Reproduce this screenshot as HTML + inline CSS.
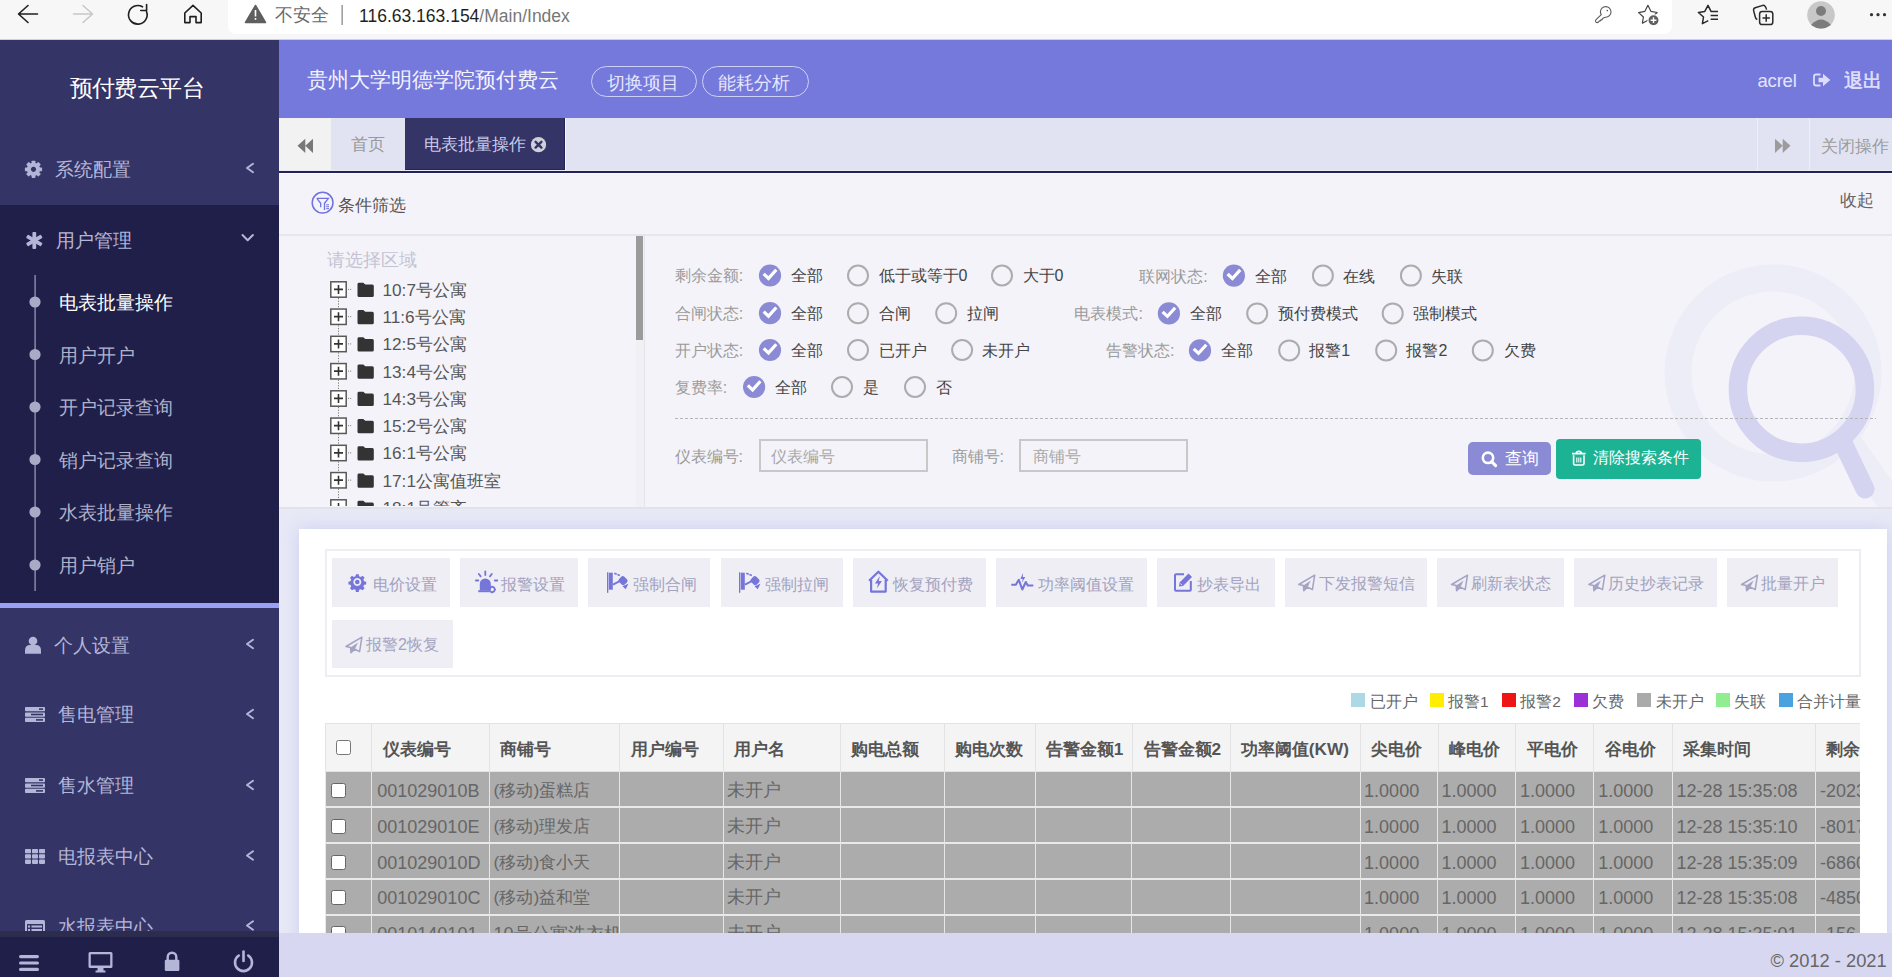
<!DOCTYPE html>
<html><head><meta charset="utf-8">
<style>
*{box-sizing:border-box}
html,body{margin:0;padding:0;width:1892px;height:977px;overflow:hidden;background:#f4f3f9;font-family:"Liberation Sans",sans-serif}
.a{position:absolute;white-space:nowrap;line-height:1}
.r{position:absolute}
svg{position:absolute;overflow:visible}
</style></head><body>
<!-- ================= BROWSER CHROME ================= -->
<div class="r" style="left:0;top:0;width:1892px;height:40px;background:#f7f7f7;border-bottom:1px solid #d2d2d2"></div>
<div class="r" style="left:228px;top:0;width:1444px;height:34px;background:#fff;border-radius:0 0 8px 8px"></div>
<svg style="left:0;top:0" width="1892" height="40">
 <g fill="none" stroke="#1f1f1f" stroke-width="1.6" stroke-linecap="round" stroke-linejoin="round">
  <path d="M28 5.5 L18.5 14 L28 22.5 M18.5 14 H37.5"/>
  <path d="M83 5.5 L92.5 14 L83 22.5 M92.5 14 H73.5" stroke="#c8c8c8"/>
  <path d="M146.5 11.5 A9.3 9.3 0 1 1 142.5 6.8"/>
  <path d="M146.6 4.6 V10.5 H140.8"/>
  <path d="M184.8 13 L193 5.3 L201.2 13 V22.6 H196 V16.6 H190 V22.6 H184.8 Z"/>
 </g>
 <path d="M255.5 5.5 L265.5 22.5 H245.5 Z" fill="#5f5f5f" stroke="#5f5f5f" stroke-width="1.5" stroke-linejoin="round"/>
 <rect x="254.7" y="10" width="1.6" height="6.5" fill="#fff"/><rect x="254.7" y="18" width="1.6" height="1.8" fill="#fff"/>
 <rect x="341.5" y="5" width="1.3" height="20" fill="#8a8a8a"/>
 <!-- right icons -->
 <g fill="none" stroke="#5a5a5a" stroke-width="1.3" stroke-linecap="round" stroke-linejoin="round">
  <path d="M1601.3 14.6 L1596 19.7 Q1594.8 21.3 1596.1 22.3 Q1597.3 23.1 1598.5 22 L1599.4 20.9 L1600.2 21 L1600.9 19.8 L1601.8 19.9 L1602.6 18.6 Q1603.6 17.5 1605.7 17.2 A5.3 5.3 0 1 0 1600.4 11.9 Q1600.5 13.6 1601.3 14.6 Z" stroke-width="1.1"/>
 </g>
 <g fill="none" stroke="#2a2a2a" stroke-width="1.5" stroke-linejoin="round">
  <path d="M1647.9 5.3 L1650.9 11.3 L1657.2 12.5 L1652.3 16.8 L1653.4 23.3 L1647.9 20.2 L1642.4 23.2 L1643.4 17 L1638.6 12.6 L1644.9 11.3 Z" stroke="#444" stroke-width="1.2"/>
  <path d="M1708.3 20.7 L1702.4 23.6 L1703.5 17 L1698.4 12.5 L1704.8 11.4 L1708 5.4 L1711 11.4 H1718 M1710.6 15.4 H1718 M1710.6 19.2 H1718"/>
  <path d="M1757.3 19.6 Q1755.8 19 1755.3 17 L1753.6 10.6 Q1753.2 8.6 1755.2 7.8 L1762.8 5.4 Q1765.2 4.9 1766.6 9.6"/>
  <rect x="1759.6" y="11.4" width="13.2" height="13.2" rx="2.6"/>
  <path d="M1766.2 14.3 V21.7 M1762.5 18 H1769.9"/>
 </g>
 <circle cx="1653.5" cy="20.2" r="5.6" fill="#5f5f5f" stroke="#fff" stroke-width="1.2"/><circle cx="1607.3" cy="10.6" r="0.8" fill="#555"/>
 <path d="M1650.6 20.2 H1656.4 M1653.5 17.3 V23.1" stroke="#fff" stroke-width="1.4"/>
 
 <circle cx="1821" cy="15" r="13.8" fill="#c8c8c8"/>
 <circle cx="1821" cy="11" r="5" fill="#7c7c7c"/>
 <path d="M1811 25 Q1821 14 1831 25 Q1821 32 1811 25 Z" fill="#7c7c7c"/>
 <circle cx="1871.5" cy="14.7" r="1.6" fill="#333"/><circle cx="1878" cy="14.7" r="1.6" fill="#333"/><circle cx="1884.5" cy="14.7" r="1.6" fill="#333"/>
</svg>
<div class="a" style="left:275px;top:7px;font-size:17.5px;color:#6a6a6a">不安全</div>
<div class="a" style="left:359px;top:7.5px;font-size:17.5px;color:#1f1f1f">116.63.163.154<span style="color:#777">/Main/Index</span></div>

<!-- ================= SIDEBAR ================= -->
<div class="r" style="left:0;top:40px;width:279px;height:937px;background:#353466"></div>
<div class="r" style="left:0;top:205px;width:279px;height:398px;background:#1f1f49"></div>
<div class="r" style="left:0;top:603px;width:279px;height:5px;background:#9aa1f4"></div>
<div class="a" style="left:69.5px;top:76.5px;font-size:23px;letter-spacing:-0.6px;color:#fff">预付费云平台</div>
<svg style="left:0;top:0" width="279" height="977">
 <g fill="#b4b6d8">
  <!-- gear -->
  <path d="M33.5 162.70000000000002a6.6 6.6 0 1 0 .01 0z M33.5 166.70000000000002a2.6 2.6 0 1 1 -.01 0z" fill-rule="evenodd"/><rect x="31.6" y="160.70000000000002" width="3.8" height="4" rx=".6" transform="rotate(0 33.5 169.3)"/><rect x="31.6" y="160.70000000000002" width="3.8" height="4" rx=".6" transform="rotate(45 33.5 169.3)"/><rect x="31.6" y="160.70000000000002" width="3.8" height="4" rx=".6" transform="rotate(90 33.5 169.3)"/><rect x="31.6" y="160.70000000000002" width="3.8" height="4" rx=".6" transform="rotate(135 33.5 169.3)"/><rect x="31.6" y="160.70000000000002" width="3.8" height="4" rx=".6" transform="rotate(180 33.5 169.3)"/><rect x="31.6" y="160.70000000000002" width="3.8" height="4" rx=".6" transform="rotate(225 33.5 169.3)"/><rect x="31.6" y="160.70000000000002" width="3.8" height="4" rx=".6" transform="rotate(270 33.5 169.3)"/><rect x="31.6" y="160.70000000000002" width="3.8" height="4" rx=".6" transform="rotate(315 33.5 169.3)"/>
  <!-- asterisk -->
  <g transform="translate(34.3 240.5)"><rect x="-1.9" y="-8.6" width="3.8" height="17.2" rx="1"/><rect x="-1.9" y="-8.6" width="3.8" height="17.2" rx="1" transform="rotate(60)"/><rect x="-1.9" y="-8.6" width="3.8" height="17.2" rx="1" transform="rotate(-60)"/></g>
  <!-- user -->
  <circle cx="33" cy="641" r="4.3"/>
  <path d="M25 653.7v-3.2q0-5.5 5-5.5h6q5 0 5 5.5v3.2z"/>
  <!-- server 售电 -->
  <g transform="translate(0 0)"><rect x="25" y="707" width="20" height="4.3" rx=".8"/><rect x="25" y="712.4" width="20" height="4.3" rx=".8"/><rect x="25" y="717.8" width="20" height="4.3" rx=".8"/></g>
  <!-- server 售水 -->
  <rect x="25" y="778" width="20" height="4.3" rx=".8"/><rect x="25" y="783.4" width="20" height="4.3" rx=".8"/><rect x="25" y="788.8" width="20" height="4.3" rx=".8"/>
  <!-- grid -->
  <g><rect x="25" y="849" width="6" height="4.3" rx=".8"/><rect x="32" y="849" width="6" height="4.3" rx=".8"/><rect x="39" y="849" width="6" height="4.3" rx=".8"/>
  <rect x="25" y="854.3" width="6" height="4.3" rx=".8"/><rect x="32" y="854.3" width="6" height="4.3" rx=".8"/><rect x="39" y="854.3" width="6" height="4.3" rx=".8"/>
  <rect x="25" y="859.6" width="6" height="4.3" rx=".8"/><rect x="32" y="859.6" width="6" height="4.3" rx=".8"/><rect x="39" y="859.6" width="6" height="4.3" rx=".8"/></g>
  <!-- list -->
  <rect x="25" y="920" width="20" height="16" rx="1.5"/>
 </g>
 <g fill="#353466">
  <rect x="39" y="708.3" width="4" height="1.6"/><rect x="31" y="713.7" width="12" height="1.6"/><rect x="36" y="719.1" width="7" height="1.6"/>
  <rect x="39" y="779.3" width="4" height="1.6"/><rect x="31" y="784.7" width="12" height="1.6"/><rect x="36" y="790.1" width="7" height="1.6"/>
  <rect x="27" y="924" width="16" height="10"/>
 </g>
 <g fill="#b4b6d8"><rect x="28" y="925.5" width="2" height="2"/><rect x="31.5" y="925.5" width="10.5" height="2"/><rect x="28" y="929" width="2" height="2"/><rect x="31.5" y="929" width="10.5" height="2"/></g>
 <!-- chevrons -->
 <g fill="none" stroke="#b4b6d8" stroke-width="2" stroke-linecap="round" stroke-linejoin="round">
  <path d="M253 163.8 L247 168 L253 172.2"/>
  <path d="M242.5 235 L247.7 240.3 L252.9 235"/>
  <path d="M253 639.8 L247 644 L253 648.2"/>
  <path d="M253 709.8 L247 714 L253 718.2"/>
  <path d="M253 780.8 L247 785 L253 789.2"/>
  <path d="M253 851.3 L247 855.5 L253 859.7"/>
  <path d="M253 921.3 L247 925.5 L253 929.7"/>
 </g>
 <!-- timeline -->
 <rect x="34.4" y="275" width="1.4" height="316" fill="#8d8fae"/>
 <g fill="#a9abc6">
  <circle cx="35" cy="302" r="5.6"/><circle cx="35" cy="354.5" r="5.6"/><circle cx="35" cy="407" r="5.6"/><circle cx="35" cy="459.5" r="5.6"/><circle cx="35" cy="512" r="5.6"/><circle cx="35" cy="565" r="5.6"/>
 </g>
</svg>
<div class="a" style="left:55.2px;top:161.3px;font-size:18.8px;color:#b4b6d8">系统配置</div>
<div class="a" style="left:56.2px;top:232.3px;font-size:18.8px;color:#b4b6d8">用户管理</div>
<div class="a" style="left:59px;top:293.0px;font-size:19px;color:#fff">电表批量操作</div>
<div class="a" style="left:59px;top:345.5px;font-size:19px;color:#b0b2cc">用户开户</div>
<div class="a" style="left:59px;top:398.0px;font-size:19px;color:#b0b2cc">开户记录查询</div>
<div class="a" style="left:59px;top:450.5px;font-size:19px;color:#b0b2cc">销户记录查询</div>
<div class="a" style="left:59px;top:503.0px;font-size:19px;color:#b0b2cc">水表批量操作</div>
<div class="a" style="left:59px;top:556.0px;font-size:19px;color:#b0b2cc">用户销户</div>
<div class="a" style="left:54.2px;top:636.8px;font-size:18.8px;color:#b4b6d8">个人设置</div>
<div class="a" style="left:58.2px;top:706.3px;font-size:18.8px;color:#b4b6d8">售电管理</div>
<div class="a" style="left:58.2px;top:777.3px;font-size:18.8px;color:#b4b6d8">售水管理</div>
<div class="a" style="left:58.2px;top:847.8px;font-size:18.8px;color:#b4b6d8">电报表中心</div>
<div class="a" style="left:58.2px;top:918.3px;font-size:18.8px;color:#b4b6d8">水报表中心</div>
<div class="r" style="left:0;top:931px;width:279px;height:6px;background:#2c2c4f"></div>
<div class="r" style="left:0;top:937px;width:279px;height:40px;background:#1f1f49"></div>
<svg style="left:0;top:937px" width="279" height="40">
 <g fill="#b4b6d8">
  <rect x="19" y="18" width="20" height="3.2" rx="1.6"/><rect x="19" y="24.4" width="20" height="3.2" rx="1.6"/><rect x="19" y="30.8" width="20" height="3.2" rx="1.6"/>
  <path d="M90 15h21a1.5 1.5 0 0 1 1.5 1.5v13a1.5 1.5 0 0 1-1.5 1.5h-21a1.5 1.5 0 0 1-1.5-1.5v-13a1.5 1.5 0 0 1 1.5-1.5z M90.8 17.3v11.2h19.4v-11.2z" fill-rule="evenodd"/>
  <rect x="97.5" y="31" width="6" height="3"/><rect x="95.5" y="33.5" width="10" height="2" rx=".5"/>
  <path d="M166.5 23v-3a5.5 5.5 0 0 1 11 0v3h-2.4v-3a3.1 3.1 0 0 0-6.2 0v3z"/><rect x="164.8" y="22.8" width="14.6" height="11.2" rx="1.2"/>
 </g>
 <g fill="none" stroke="#b4b6d8" stroke-width="2.6" stroke-linecap="round">
  <path d="M238.8 18.5 A8.5 8.5 0 1 0 248.2 18.5"/><path d="M243.5 14.5 V24"/>
 </g>
</svg>



<!-- ================= HEADER ================= -->
<div class="r" style="left:279px;top:40px;width:1613px;height:78px;background:#7579db"></div>
<div class="a" style="left:306.5px;top:68.5px;font-size:21.1px;color:#f4f4ff">贵州大学明德学院预付费云</div>
<div class="r" style="left:591px;top:66px;width:106px;height:31px;border:1px solid #cdd0f7;border-radius:16px"></div>
<div class="r" style="left:702px;top:66px;width:107px;height:31px;border:1px solid #cdd0f7;border-radius:16px"></div>
<div class="a" style="left:607px;top:73.5px;font-size:18.2px;color:#e6e7ff">切换项目</div>
<div class="a" style="left:718px;top:73.5px;font-size:18.2px;color:#e6e7ff">能耗分析</div>
<div class="a" style="left:1757.5px;top:71.5px;font-size:18.5px;letter-spacing:-0.2px;color:#e4e4ff">acrel</div>
<svg style="left:0;top:0" width="1892" height="120">
 <path d="M1820.5 74.5 H1816 Q1814 74.5 1814 76.5 V83.5 Q1814 85.5 1816 85.5 H1820.5" fill="none" stroke="#dcdcfb" stroke-width="1.8"/>
 <path d="M1818.5 77.8 H1823 V73.8 L1830.3 80 L1823 86.2 V82.2 H1818.5 Z" fill="#dcdcfb"/>
</svg>
<div class="a" style="left:1844px;top:71.3px;font-size:19px;font-weight:bold;color:#dcdcfb">退出</div>

<!-- ================= TABS ================= -->
<div class="r" style="left:279px;top:118px;width:1613px;height:53px;background:#e1e3f3"></div>
<div class="r" style="left:279px;top:118px;width:52px;height:52px;background:#f2f2f2"></div>
<div class="r" style="left:279px;top:170px;width:1613px;height:1px;background:#ebebf6"></div>
<div class="r" style="left:279px;top:171px;width:1613px;height:2px;background:#22215a"></div>
<div class="r" style="left:279px;top:173px;width:1613px;height:1px;background:#fbfbff"></div>
<div class="r" style="left:405px;top:118px;width:160px;height:52px;background:#353466;border-right:1px solid #25245a;border-bottom:1px solid #25245a"></div>
<div class="r" style="left:565px;top:118px;width:1px;height:53px;background:#f6f6fb"></div>
<div class="r" style="left:1757px;top:118px;width:1px;height:52px;background:#f0f0f4"></div>
<div class="r" style="left:1809px;top:118px;width:1px;height:52px;background:#f0f0f4"></div>
<svg style="left:0;top:118px" width="1892" height="55">
 <path d="M297.5 27.8 L305.3 20.7 V34.9 Z M305.3 27.8 L313 20.7 V34.9 Z" fill="#787878"/>
 <path d="M1790.5 27.8 L1782.7 20.7 V34.9 Z M1782.7 27.8 L1775 20.7 V34.9 Z" fill="#9c9c9c"/>
 <circle cx="538.5" cy="26.7" r="7.6" fill="#cfd0da"/>
 <path d="M535.6 23.8 L541.4 29.6 M541.4 23.8 L535.6 29.6" stroke="#353466" stroke-width="2.4" stroke-linecap="round"/>
</svg>
<div class="a" style="left:351px;top:135.5px;font-size:17.4px;color:#9a9a9a">首页</div>
<div class="a" style="left:423.5px;top:136.3px;font-size:17.2px;color:#c9cbe9">电表批量操作</div>
<div class="a" style="left:1821px;top:137.5px;font-size:17.4px;color:#9c9c9c">关闭操作</div>

<!-- ================= FILTER ================= -->
<svg style="left:0;top:0" width="1892" height="977">
 <circle cx="1773" cy="373" r="95" fill="none" stroke="#ededf7" stroke-width="27"/>
 <path d="M1845 438 L1900 515" stroke="#ededf7" stroke-width="27"/>
 <circle cx="1801.4" cy="389.2" r="63.5" fill="none" stroke="#d4d3f0" stroke-width="18.5"/>
 <path d="M1843 443 L1865 489" stroke="#d4d3f0" stroke-width="19" stroke-linecap="round"/>
 <circle cx="322.6" cy="202.7" r="10.4" fill="none" stroke="#7272df" stroke-width="1.5"/>
 <path d="M316.8 198.3 H328.4 L324.5 203.3 V210 M316.8 198.3 L320.7 203.3 V207.3" fill="none" stroke="#7272df" stroke-width="1.3"/>
 <path d="M326.2 204.8 H329 M326.2 206.7 H329 M326.2 208.6 H329" stroke="#7272df" stroke-width="1"/>
</svg>
<div class="a" style="left:338px;top:196.5px;font-size:17.3px;color:#555">条件筛选</div>
<div class="a" style="left:1839.5px;top:191.5px;font-size:17.3px;color:#666">收起</div>
<div class="r" style="left:279px;top:234px;width:1613px;height:2px;background:#e6e6ee"></div>
<div class="r" style="left:644px;top:236px;width:1px;height:271px;background:#e4e4ec"></div>
<div class="r" style="left:636px;top:236px;width:8px;height:271px;background:#f1f1f5"></div>
<div class="r" style="left:636px;top:236px;width:7px;height:104px;background:#9b9b9b"></div>
<div class="a" style="left:326.5px;top:251px;font-size:18px;color:#c5c3d3">请选择区域</div>
<div class="r" style="left:279px;top:236px;width:357px;height:270px;overflow:hidden">
<svg style="left:-279px;top:-236px" width="700" height="560">
<rect x="330.8" y="281.80" width="15.4" height="15.4" fill="#fff" stroke="#585858" stroke-width="1.5"/>
<path d="M334 289.40 H343 M338.5 284.90 V293.90" stroke="#333" stroke-width="1.6"/>
<path d="M348 289.40 H352" stroke="#777" stroke-width="1" stroke-dasharray="1 1.2"/>
<path d="M338.5 298.00 V308.00" stroke="#777" stroke-width="1" stroke-dasharray="1.2 1.5"/>
<path d="M357.5 284.20 Q357.5 282.80 359 282.80 H363.3 L365.3 284.60 H372.3 Q373.8 284.60 373.8 286.10 V295.40 Q373.8 297.00 372.3 297.00 H359 Q357.5 297.00 357.5 295.40 Z" fill="#333"/>
<rect x="330.8" y="309.05" width="15.4" height="15.4" fill="#fff" stroke="#585858" stroke-width="1.5"/>
<path d="M334 316.65 H343 M338.5 312.15 V321.15" stroke="#333" stroke-width="1.6"/>
<path d="M348 316.65 H352" stroke="#777" stroke-width="1" stroke-dasharray="1 1.2"/>
<path d="M338.5 325.25 V335.25" stroke="#777" stroke-width="1" stroke-dasharray="1.2 1.5"/>
<path d="M357.5 311.45 Q357.5 310.05 359 310.05 H363.3 L365.3 311.85 H372.3 Q373.8 311.85 373.8 313.35 V322.65 Q373.8 324.25 372.3 324.25 H359 Q357.5 324.25 357.5 322.65 Z" fill="#333"/>
<rect x="330.8" y="336.30" width="15.4" height="15.4" fill="#fff" stroke="#585858" stroke-width="1.5"/>
<path d="M334 343.90 H343 M338.5 339.40 V348.40" stroke="#333" stroke-width="1.6"/>
<path d="M348 343.90 H352" stroke="#777" stroke-width="1" stroke-dasharray="1 1.2"/>
<path d="M338.5 352.50 V362.50" stroke="#777" stroke-width="1" stroke-dasharray="1.2 1.5"/>
<path d="M357.5 338.70 Q357.5 337.30 359 337.30 H363.3 L365.3 339.10 H372.3 Q373.8 339.10 373.8 340.60 V349.90 Q373.8 351.50 372.3 351.50 H359 Q357.5 351.50 357.5 349.90 Z" fill="#333"/>
<rect x="330.8" y="363.55" width="15.4" height="15.4" fill="#fff" stroke="#585858" stroke-width="1.5"/>
<path d="M334 371.15 H343 M338.5 366.65 V375.65" stroke="#333" stroke-width="1.6"/>
<path d="M348 371.15 H352" stroke="#777" stroke-width="1" stroke-dasharray="1 1.2"/>
<path d="M338.5 379.75 V389.75" stroke="#777" stroke-width="1" stroke-dasharray="1.2 1.5"/>
<path d="M357.5 365.95 Q357.5 364.55 359 364.55 H363.3 L365.3 366.35 H372.3 Q373.8 366.35 373.8 367.85 V377.15 Q373.8 378.75 372.3 378.75 H359 Q357.5 378.75 357.5 377.15 Z" fill="#333"/>
<rect x="330.8" y="390.80" width="15.4" height="15.4" fill="#fff" stroke="#585858" stroke-width="1.5"/>
<path d="M334 398.40 H343 M338.5 393.90 V402.90" stroke="#333" stroke-width="1.6"/>
<path d="M348 398.40 H352" stroke="#777" stroke-width="1" stroke-dasharray="1 1.2"/>
<path d="M338.5 407.00 V417.00" stroke="#777" stroke-width="1" stroke-dasharray="1.2 1.5"/>
<path d="M357.5 393.20 Q357.5 391.80 359 391.80 H363.3 L365.3 393.60 H372.3 Q373.8 393.60 373.8 395.10 V404.40 Q373.8 406.00 372.3 406.00 H359 Q357.5 406.00 357.5 404.40 Z" fill="#333"/>
<rect x="330.8" y="418.05" width="15.4" height="15.4" fill="#fff" stroke="#585858" stroke-width="1.5"/>
<path d="M334 425.65 H343 M338.5 421.15 V430.15" stroke="#333" stroke-width="1.6"/>
<path d="M348 425.65 H352" stroke="#777" stroke-width="1" stroke-dasharray="1 1.2"/>
<path d="M338.5 434.25 V444.25" stroke="#777" stroke-width="1" stroke-dasharray="1.2 1.5"/>
<path d="M357.5 420.45 Q357.5 419.05 359 419.05 H363.3 L365.3 420.85 H372.3 Q373.8 420.85 373.8 422.35 V431.65 Q373.8 433.25 372.3 433.25 H359 Q357.5 433.25 357.5 431.65 Z" fill="#333"/>
<rect x="330.8" y="445.30" width="15.4" height="15.4" fill="#fff" stroke="#585858" stroke-width="1.5"/>
<path d="M334 452.90 H343 M338.5 448.40 V457.40" stroke="#333" stroke-width="1.6"/>
<path d="M348 452.90 H352" stroke="#777" stroke-width="1" stroke-dasharray="1 1.2"/>
<path d="M338.5 461.50 V471.50" stroke="#777" stroke-width="1" stroke-dasharray="1.2 1.5"/>
<path d="M357.5 447.70 Q357.5 446.30 359 446.30 H363.3 L365.3 448.10 H372.3 Q373.8 448.10 373.8 449.60 V458.90 Q373.8 460.50 372.3 460.50 H359 Q357.5 460.50 357.5 458.90 Z" fill="#333"/>
<rect x="330.8" y="472.55" width="15.4" height="15.4" fill="#fff" stroke="#585858" stroke-width="1.5"/>
<path d="M334 480.15 H343 M338.5 475.65 V484.65" stroke="#333" stroke-width="1.6"/>
<path d="M348 480.15 H352" stroke="#777" stroke-width="1" stroke-dasharray="1 1.2"/>
<path d="M338.5 488.75 V498.75" stroke="#777" stroke-width="1" stroke-dasharray="1.2 1.5"/>
<path d="M357.5 474.95 Q357.5 473.55 359 473.55 H363.3 L365.3 475.35 H372.3 Q373.8 475.35 373.8 476.85 V486.15 Q373.8 487.75 372.3 487.75 H359 Q357.5 487.75 357.5 486.15 Z" fill="#333"/>
<rect x="330.8" y="499.80" width="15.4" height="15.4" fill="#fff" stroke="#585858" stroke-width="1.5"/>
<path d="M334 507.40 H343 M338.5 502.90 V511.90" stroke="#333" stroke-width="1.6"/>
<path d="M348 507.40 H352" stroke="#777" stroke-width="1" stroke-dasharray="1 1.2"/>
<path d="M338.5 516.00 V526.00" stroke="#777" stroke-width="1" stroke-dasharray="1.2 1.5"/>
<path d="M357.5 502.20 Q357.5 500.80 359 500.80 H363.3 L365.3 502.60 H372.3 Q373.8 502.60 373.8 504.10 V513.40 Q373.8 515.00 372.3 515.00 H359 Q357.5 515.00 357.5 513.40 Z" fill="#333"/>
</svg>
<div class="a" style="left:103.5px;top:45.80px;font-size:17.2px;color:#555">10:7号公寓</div>
<div class="a" style="left:103.5px;top:73.05px;font-size:17.2px;color:#555">11:6号公寓</div>
<div class="a" style="left:103.5px;top:100.30px;font-size:17.2px;color:#555">12:5号公寓</div>
<div class="a" style="left:103.5px;top:127.55px;font-size:17.2px;color:#555">13:4号公寓</div>
<div class="a" style="left:103.5px;top:154.80px;font-size:17.2px;color:#555">14:3号公寓</div>
<div class="a" style="left:103.5px;top:182.05px;font-size:17.2px;color:#555">15:2号公寓</div>
<div class="a" style="left:103.5px;top:209.30px;font-size:17.2px;color:#555">16:1号公寓</div>
<div class="a" style="left:103.5px;top:236.55px;font-size:17.2px;color:#555">17:1公寓值班室</div>
<div class="a" style="left:103.5px;top:263.80px;font-size:17.2px;color:#555">18:1号管齐</div>
</div>
<svg style="left:0;top:0" width="1892" height="977">
<circle cx="770" cy="275.5" r="11.1" fill="#8b8bd5"/><path d="M763.7 273.9 L768.5 278.4 L776.3 269.8" fill="none" stroke="#fff" stroke-width="3.2" stroke-linejoin="miter"/>
<circle cx="858" cy="275.5" r="10" fill="none" stroke="#acacac" stroke-width="2"/>
<circle cx="1002" cy="275.5" r="10" fill="none" stroke="#acacac" stroke-width="2"/>
<circle cx="770" cy="313.2" r="11.1" fill="#8b8bd5"/><path d="M763.7 311.6 L768.5 316.1 L776.3 307.5" fill="none" stroke="#fff" stroke-width="3.2" stroke-linejoin="miter"/>
<circle cx="858" cy="313.2" r="10" fill="none" stroke="#acacac" stroke-width="2"/>
<circle cx="946.2" cy="313.2" r="10" fill="none" stroke="#acacac" stroke-width="2"/>
<circle cx="770" cy="350.0" r="11.1" fill="#8b8bd5"/><path d="M763.7 348.4 L768.5 352.9 L776.3 344.3" fill="none" stroke="#fff" stroke-width="3.2" stroke-linejoin="miter"/>
<circle cx="858" cy="350.0" r="10" fill="none" stroke="#acacac" stroke-width="2"/>
<circle cx="962.1" cy="350.0" r="10" fill="none" stroke="#acacac" stroke-width="2"/>
<circle cx="754.1" cy="387.0" r="11.1" fill="#8b8bd5"/><path d="M747.8000000000001 385.4 L752.6 389.9 L760.4 381.3" fill="none" stroke="#fff" stroke-width="3.2" stroke-linejoin="miter"/>
<circle cx="842" cy="387.0" r="10" fill="none" stroke="#acacac" stroke-width="2"/>
<circle cx="915" cy="387.0" r="10" fill="none" stroke="#acacac" stroke-width="2"/>
<circle cx="1233.9" cy="275.6" r="11.1" fill="#8b8bd5"/><path d="M1227.6000000000001 274.0 L1232.4 278.5 L1240.2 269.9" fill="none" stroke="#fff" stroke-width="3.2" stroke-linejoin="miter"/>
<circle cx="1322.9" cy="275.6" r="10" fill="none" stroke="#acacac" stroke-width="2"/>
<circle cx="1410.9" cy="275.6" r="10" fill="none" stroke="#acacac" stroke-width="2"/>
<circle cx="1168.9" cy="313.4" r="11.1" fill="#8b8bd5"/><path d="M1162.6000000000001 311.8 L1167.4 316.3 L1175.2 307.7" fill="none" stroke="#fff" stroke-width="3.2" stroke-linejoin="miter"/>
<circle cx="1257.2" cy="313.4" r="10" fill="none" stroke="#acacac" stroke-width="2"/>
<circle cx="1392.7" cy="313.4" r="10" fill="none" stroke="#acacac" stroke-width="2"/>
<circle cx="1200" cy="350.4" r="11.1" fill="#8b8bd5"/><path d="M1193.7 348.8 L1198.5 353.3 L1206.3 344.7" fill="none" stroke="#fff" stroke-width="3.2" stroke-linejoin="miter"/>
<circle cx="1289.2" cy="350.4" r="10" fill="none" stroke="#acacac" stroke-width="2"/>
<circle cx="1386.2" cy="350.4" r="10" fill="none" stroke="#acacac" stroke-width="2"/>
<circle cx="1482.8" cy="350.4" r="10" fill="none" stroke="#acacac" stroke-width="2"/>
<path d="M675 418.5 H1876" stroke="#b5b5b5" stroke-width="1" stroke-dasharray="3 2"/>
</svg>
<div class="a" style="left:674.7px;top:268.4px;font-size:16px;color:#9b9b9b">剩余金额:</div>
<div class="a" style="left:790.5px;top:268.4px;font-size:16px;color:#444">全部</div>
<div class="a" style="left:878.5px;top:268.4px;font-size:16px;color:#444">低于或等于0</div>
<div class="a" style="left:1022.5px;top:268.4px;font-size:16px;color:#444">大于0</div>
<div class="a" style="left:674.7px;top:306.1px;font-size:16px;color:#9b9b9b">合闸状态:</div>
<div class="a" style="left:790.5px;top:306.1px;font-size:16px;color:#444">全部</div>
<div class="a" style="left:878.5px;top:306.1px;font-size:16px;color:#444">合闸</div>
<div class="a" style="left:966.6px;top:306.1px;font-size:16px;color:#444">拉闸</div>
<div class="a" style="left:674.7px;top:342.9px;font-size:16px;color:#9b9b9b">开户状态:</div>
<div class="a" style="left:790.5px;top:342.9px;font-size:16px;color:#444">全部</div>
<div class="a" style="left:878.5px;top:342.9px;font-size:16px;color:#444">已开户</div>
<div class="a" style="left:982.0px;top:342.9px;font-size:16px;color:#444">未开户</div>
<div class="a" style="left:674.7px;top:379.9px;font-size:16px;color:#9b9b9b">复费率:</div>
<div class="a" style="left:774.6px;top:379.9px;font-size:16px;color:#444">全部</div>
<div class="a" style="left:862.6px;top:379.9px;font-size:16px;color:#444">是</div>
<div class="a" style="left:935.6px;top:379.9px;font-size:16px;color:#444">否</div>
<div class="a" style="left:1139.3px;top:268.5px;font-size:16px;color:#9b9b9b">联网状态:</div>
<div class="a" style="left:1254.6px;top:268.5px;font-size:16px;color:#444">全部</div>
<div class="a" style="left:1342.7px;top:268.5px;font-size:16px;color:#444">在线</div>
<div class="a" style="left:1430.8px;top:268.5px;font-size:16px;color:#444">失联</div>
<div class="a" style="left:1074.4px;top:306.3px;font-size:16px;color:#9b9b9b">电表模式:</div>
<div class="a" style="left:1190.0px;top:306.3px;font-size:16px;color:#444">全部</div>
<div class="a" style="left:1277.7px;top:306.3px;font-size:16px;color:#444">预付费模式</div>
<div class="a" style="left:1413.0px;top:306.3px;font-size:16px;color:#444">强制模式</div>
<div class="a" style="left:1106.0px;top:343.3px;font-size:16px;color:#9b9b9b">告警状态:</div>
<div class="a" style="left:1221.2px;top:343.3px;font-size:16px;color:#444">全部</div>
<div class="a" style="left:1309.3px;top:343.3px;font-size:16px;color:#444">报警1</div>
<div class="a" style="left:1406.4px;top:343.3px;font-size:16px;color:#444">报警2</div>
<div class="a" style="left:1503.8px;top:343.3px;font-size:16px;color:#444">欠费</div>
<div class="a" style="left:674.5px;top:448.8px;font-size:16px;color:#9b9b9b">仪表编号:</div>
<div class="r" style="left:759px;top:439px;width:169px;height:33px;border:2px solid #c8c8c8;background:#f4f3f9"></div>
<div class="a" style="left:771px;top:448.8px;font-size:16px;color:#a8a8a8">仪表编号</div>
<div class="a" style="left:951.5px;top:448.8px;font-size:16px;color:#9b9b9b">商铺号:</div>
<div class="r" style="left:1019px;top:439px;width:169px;height:33px;border:2px solid #c8c8c8;background:#f4f3f9"></div>
<div class="a" style="left:1033px;top:448.8px;font-size:16px;color:#a8a8a8">商铺号</div>
<div class="r" style="left:1468px;top:442px;width:83px;height:33px;background:#8b8bd5;border-radius:5px"></div>
<div class="r" style="left:1556px;top:439px;width:145px;height:40px;background:#1bb394;border-radius:4px"></div>
<svg style="left:0;top:0" width="1892" height="977">
 <circle cx="1488" cy="457.8" r="5.2" fill="none" stroke="#fff" stroke-width="2.6"/>
 <path d="M1491.6 461.6 L1495.6 465.6" stroke="#fff" stroke-width="3" stroke-linecap="round"/>
 <path d="M1572 453.6 H1585.6 M1576.3 453.6 Q1576.3 451.2 1578.8 451.2 Q1581.3 451.2 1581.3 453.6" fill="none" stroke="#fff" stroke-width="1.6"/>
 <path d="M1573.6 455.2 V463.6 Q1573.6 465 1575 465 H1582.6 Q1584 465 1584 463.6 V455.2" fill="none" stroke="#fff" stroke-width="1.6"/>
 <path d="M1576.8 457.5 V462.5 M1578.8 457.5 V462.5 M1580.8 457.5 V462.5" stroke="#fff" stroke-width="1.1"/>
</svg>
<div class="a" style="left:1505px;top:450px;font-size:16.5px;color:#fff">查询</div>
<div class="a" style="left:1592.5px;top:449.8px;font-size:16px;color:#fff">清除搜索条件</div>
<div class="r" style="left:279px;top:507px;width:1613px;height:2px;background:#e2e2ea"></div>
<!-- ================= LOWER ================= -->
<div class="r" style="left:279px;top:509px;width:1613px;height:424px;background:#e8e9f6"></div>
<div class="r" style="left:299px;top:529px;width:1588px;height:420px;background:#fff;box-shadow:0 0 16px 0 rgba(165,175,240,.45)"></div>
<div class="r" style="left:325px;top:549px;width:1536px;height:128px;border:2px solid #ededf3"></div>
<div class="r" style="left:332px;top:558px;width:118px;height:49px;background:#eeeef4"></div>
<div class="r" style="left:460px;top:558px;width:118px;height:49px;background:#eeeef4"></div>
<div class="r" style="left:588px;top:558px;width:122px;height:49px;background:#eeeef4"></div>
<div class="r" style="left:721px;top:558px;width:122px;height:49px;background:#eeeef4"></div>
<div class="r" style="left:853px;top:558px;width:133px;height:49px;background:#eeeef4"></div>
<div class="r" style="left:996px;top:558px;width:151px;height:49px;background:#eeeef4"></div>
<div class="r" style="left:1157px;top:558px;width:118px;height:49px;background:#eeeef4"></div>
<div class="r" style="left:1285px;top:558px;width:142px;height:49px;background:#eeeef4"></div>
<div class="r" style="left:1437px;top:558px;width:127px;height:49px;background:#eeeef4"></div>
<div class="r" style="left:1574px;top:558px;width:143px;height:49px;background:#eeeef4"></div>
<div class="r" style="left:1727px;top:558px;width:111px;height:49px;background:#eeeef4"></div>
<div class="r" style="left:332px;top:620px;width:121px;height:48px;background:#eeeef4"></div>
<svg style="left:0;top:0" width="1892" height="977">
<g transform="translate(357.3 582) scale(0.87)" fill="#7575da"><path d="M-1.6-9h3.2l.5 2.4 1.9.8 2.1-1.4 2.3 2.3-1.4 2.1.8 1.9 2.4.5v3.2l-2.4.5-.8 1.9 1.4 2.1-2.3 2.3-2.1-1.4-1.9.8-.5 2.4h-3.2l-.5-2.4-1.9-.8-2.1 1.4-2.3-2.3 1.4-2.1-.8-1.9-2.4-.5v-3.2l2.4-.5.8-1.9-1.4-2.1 2.3-2.3 2.1 1.4 1.9-.8z M0-4.6a4.6 4.6 0 1 0 .01 0z M0-2.6a2.6 2.6 0 1 1-.01 0z" fill-rule="evenodd"/></g>
<g transform="translate(486.3 582)"><path d="M-6.5 8.5 V2 A5.5 5.5 0 0 1 4.5 2 V8.5 Z" fill="#7575da"/><rect x="-8" y="8.2" width="11" height="2" fill="#7575da"/>
<path d="M-1 -10.5 V-7 M-7.5-8 L-5.6-5.6 M5.5-8 L3.6-5.6 M-10.5-1.5 H-8 M8.5-1.5 H11" stroke="#7575da" stroke-width="1.8" stroke-linecap="round"/>
<circle cx="5.8" cy="7.5" r="2.6" fill="none" stroke="#7575da" stroke-width="1.6"/><path d="M5.8 3.8V5 M5.8 10V11.2 M2.1 7.5H3.3 M8.3 7.5H9.5" stroke="#7575da" stroke-width="1.3"/></g>
<g transform="translate(0.0 0)"><rect x="607" y="572.3" width="1.3" height="20.5" fill="#7575da"/><rect x="608.8" y="572.7" width="4" height="17" fill="#7575da"/><path d="M614.3 573.3 L620.6 575.9" stroke="#7575da" stroke-width="1.6" stroke-dasharray="2.6 0.8"/><path d="M613 584.6 L620.2 580.9" stroke="#7575da" stroke-width="1.8"/><rect x="619" y="577" width="8" height="7.4" rx="2.2" fill="#7575da" transform="rotate(45 623 580.7)"/><path d="M622.5 586.3 L628.4 583.8 L625.7 589.3 Z" fill="#7575da"/></g>
<g transform="translate(132.0 0)"><rect x="607" y="572.3" width="1.3" height="20.5" fill="#7575da"/><rect x="608.8" y="572.7" width="4" height="17" fill="#7575da"/><path d="M614.3 573.3 L620.6 575.9" stroke="#7575da" stroke-width="1.6" stroke-dasharray="2.6 0.8"/><path d="M613 584.6 L620.2 580.9" stroke="#7575da" stroke-width="1.8"/><rect x="619" y="577" width="8" height="7.4" rx="2.2" fill="#7575da" transform="rotate(45 623 580.7)"/><path d="M622.5 586.3 L628.4 583.8 L625.7 589.3 Z" fill="#7575da"/></g>
<g transform="translate(878.4 582)"><path d="M-9.3-1.2 L0-10.3 L9.3-1.2 M-7.3 -2.2 V9.6 H7.3 V-2.2" fill="none" stroke="#7575da" stroke-width="2.2" stroke-linejoin="round"/><path d="M1.5-6 L-3.5 1.5 H-0.3 L-1.5 6.5 L3.5-1 H0.3 Z" fill="#7575da"/></g>
<g transform="translate(1022.3 582)"><path d="M-11 2.8 H-6.5 L-3.5 -2.2 L0 7.5 L3.5 0 L5.5 3.5 H11" fill="none" stroke="#7575da" stroke-width="2.1" stroke-linejoin="round"/><path d="M0.8 -9 L-2 -3 H0.5 L-0.5 1 L3 -5 H0.5 Z" fill="#7575da"/></g>
<g transform="translate(1183 582)"><path d="M1 -7.8 H-7 Q-8 -7.8 -8 -6.8 V7.8 Q-8 8.8 -7 8.8 H6.8 Q7.8 8.8 7.8 7.8 V-1" fill="none" stroke="#7575da" stroke-width="2"/><path d="M-4 4.5 L-3.4 0.5 L5.5 -8.5 L9 -5 L0 4 Z" fill="#7575da"/><path d="M-2.6 1.5 L-1.2 3" stroke="#eeeef4" stroke-width="1"/></g>
<g transform="translate(1307.0 583.0)"><path d="M7.7 -7.8 L-8.2 1.5 L-3.6 2.6 L-3.2 7.8 L0.6 4.2 L5.4 6.7 Z" fill="none" stroke="#a4a3c4" stroke-width="1.5" stroke-linejoin="round"/><path d="M-3.6 2.6 L3.8 -2.6 L0.6 4.2 L-3.2 7.8 Z" fill="#a4a3c4"/></g>
<g transform="translate(1459.8 583.0)"><path d="M7.7 -7.8 L-8.2 1.5 L-3.6 2.6 L-3.2 7.8 L0.6 4.2 L5.4 6.7 Z" fill="none" stroke="#a4a3c4" stroke-width="1.5" stroke-linejoin="round"/><path d="M-3.6 2.6 L3.8 -2.6 L0.6 4.2 L-3.2 7.8 Z" fill="#a4a3c4"/></g>
<g transform="translate(1597.1 583.0)"><path d="M7.7 -7.8 L-8.2 1.5 L-3.6 2.6 L-3.2 7.8 L0.6 4.2 L5.4 6.7 Z" fill="none" stroke="#a4a3c4" stroke-width="1.5" stroke-linejoin="round"/><path d="M-3.6 2.6 L3.8 -2.6 L0.6 4.2 L-3.2 7.8 Z" fill="#a4a3c4"/></g>
<g transform="translate(1749.8 583.0)"><path d="M7.7 -7.8 L-8.2 1.5 L-3.6 2.6 L-3.2 7.8 L0.6 4.2 L5.4 6.7 Z" fill="none" stroke="#a4a3c4" stroke-width="1.5" stroke-linejoin="round"/><path d="M-3.6 2.6 L3.8 -2.6 L0.6 4.2 L-3.2 7.8 Z" fill="#a4a3c4"/></g>
<g transform="translate(354.2 645.0)"><path d="M7.7 -7.8 L-8.2 1.5 L-3.6 2.6 L-3.2 7.8 L0.6 4.2 L5.4 6.7 Z" fill="none" stroke="#a4a3c4" stroke-width="1.5" stroke-linejoin="round"/><path d="M-3.6 2.6 L3.8 -2.6 L0.6 4.2 L-3.2 7.8 Z" fill="#a4a3c4"/></g>
</svg>
<div class="a" style="left:372.5px;top:576.5px;font-size:16px;color:#a3a2bf">电价设置</div>
<div class="a" style="left:500.7px;top:576.5px;font-size:16px;color:#a3a2bf">报警设置</div>
<div class="a" style="left:633.0px;top:576.5px;font-size:16px;color:#a3a2bf">强制合闸</div>
<div class="a" style="left:765.0px;top:576.5px;font-size:16px;color:#a3a2bf">强制拉闸</div>
<div class="a" style="left:893.4px;top:576.5px;font-size:16px;color:#a3a2bf">恢复预付费</div>
<div class="a" style="left:1038.4px;top:576.5px;font-size:16px;color:#a3a2bf">功率阈值设置</div>
<div class="a" style="left:1196.8px;top:576.5px;font-size:16px;color:#a3a2bf">抄表导出</div>
<div class="a" style="left:1318.7px;top:575.5px;font-size:16px;color:#a3a2bf">下发报警短信</div>
<div class="a" style="left:1470.9px;top:575.5px;font-size:16px;color:#a3a2bf">刷新表状态</div>
<div class="a" style="left:1608.0px;top:575.5px;font-size:16px;color:#a3a2bf">历史抄表记录</div>
<div class="a" style="left:1761.0px;top:575.5px;font-size:16px;color:#a3a2bf">批量开户</div>
<div class="a" style="left:366px;top:636.5px;font-size:16px;color:#a3a2bf">报警2恢复</div>
<div class="r" style="left:1351px;top:693px;width:14px;height:14px;background:#add8e6"></div>
<div class="a" style="left:1370px;top:693.7px;font-size:15.5px;color:#666">已开户</div>
<div class="r" style="left:1430px;top:693px;width:14px;height:14px;background:#ffee00"></div>
<div class="a" style="left:1448px;top:693.7px;font-size:15.5px;color:#666">报警1</div>
<div class="r" style="left:1502px;top:693px;width:14px;height:14px;background:#ee1515"></div>
<div class="a" style="left:1520.3px;top:693.7px;font-size:15.5px;color:#666">报警2</div>
<div class="r" style="left:1574px;top:693px;width:14px;height:14px;background:#9b30d9"></div>
<div class="a" style="left:1592px;top:693.7px;font-size:15.5px;color:#666">欠费</div>
<div class="r" style="left:1637px;top:693px;width:14px;height:14px;background:#aaaaaa"></div>
<div class="a" style="left:1655.5px;top:693.7px;font-size:15.5px;color:#666">未开户</div>
<div class="r" style="left:1715.6px;top:693px;width:14px;height:14px;background:#90ee90"></div>
<div class="a" style="left:1733.7px;top:693.7px;font-size:15.5px;color:#666">失联</div>
<div class="r" style="left:1779px;top:693px;width:14px;height:14px;background:#4aa3df"></div>
<div class="a" style="left:1797px;top:693.7px;font-size:15.5px;color:#666">合并计量</div>
<div class="r" style="left:325px;top:723px;width:1535px;height:210px;overflow:hidden">
<div class="r" style="left:0;top:0;width:1536px;height:49px;background:#f4f4f4;border:1px solid #e3e3e3;border-right:0"></div>
<div class="r" style="left:0;top:49px;width:1536px;height:200px;background:#e9e9e9"></div>
<div class="r" style="left:1px;top:49px;width:1535px;height:34px;background:#acacac"></div>
<div class="r" style="left:1px;top:85px;width:1535px;height:34px;background:#acacac"></div>
<div class="r" style="left:1px;top:121px;width:1535px;height:34px;background:#acacac"></div>
<div class="r" style="left:1px;top:157px;width:1535px;height:34px;background:#acacac"></div>
<div class="r" style="left:1px;top:193px;width:1535px;height:34px;background:#acacac"></div>
<div class="r" style="left:1px;top:229px;width:1535px;height:34px;background:#acacac"></div>
<div class="r" style="left:46px;top:49px;width:1px;height:200px;background:#e6e6e6"></div>
<div class="r" style="left:164px;top:49px;width:1px;height:200px;background:#e6e6e6"></div>
<div class="r" style="left:294px;top:49px;width:1px;height:200px;background:#e6e6e6"></div>
<div class="r" style="left:398px;top:49px;width:1px;height:200px;background:#e6e6e6"></div>
<div class="r" style="left:515px;top:49px;width:1px;height:200px;background:#e6e6e6"></div>
<div class="r" style="left:619px;top:49px;width:1px;height:200px;background:#e6e6e6"></div>
<div class="r" style="left:710px;top:49px;width:1px;height:200px;background:#e6e6e6"></div>
<div class="r" style="left:806px;top:49px;width:1px;height:200px;background:#e6e6e6"></div>
<div class="r" style="left:905px;top:49px;width:1px;height:200px;background:#e6e6e6"></div>
<div class="r" style="left:1035px;top:49px;width:1px;height:200px;background:#e6e6e6"></div>
<div class="r" style="left:1112px;top:49px;width:1px;height:200px;background:#e6e6e6"></div>
<div class="r" style="left:1190px;top:49px;width:1px;height:200px;background:#e6e6e6"></div>
<div class="r" style="left:1268px;top:49px;width:1px;height:200px;background:#e6e6e6"></div>
<div class="r" style="left:1347px;top:49px;width:1px;height:200px;background:#e6e6e6"></div>
<div class="r" style="left:1490px;top:49px;width:1px;height:200px;background:#e6e6e6"></div>
<div class="r" style="left:46px;top:1px;width:1px;height:48px;background:#e3e3e3"></div>
<div class="r" style="left:163.5px;top:1px;width:1px;height:48px;background:#e3e3e3"></div>
<div class="r" style="left:293.5px;top:1px;width:1px;height:48px;background:#e3e3e3"></div>
<div class="r" style="left:397.6px;top:1px;width:1px;height:48px;background:#e3e3e3"></div>
<div class="r" style="left:514.6px;top:1px;width:1px;height:48px;background:#e3e3e3"></div>
<div class="r" style="left:618.6px;top:1px;width:1px;height:48px;background:#e3e3e3"></div>
<div class="r" style="left:709.7px;top:1px;width:1px;height:48px;background:#e3e3e3"></div>
<div class="r" style="left:806.5px;top:1px;width:1px;height:48px;background:#e3e3e3"></div>
<div class="r" style="left:904.7px;top:1px;width:1px;height:48px;background:#e3e3e3"></div>
<div class="r" style="left:1034.6px;top:1px;width:1px;height:48px;background:#e3e3e3"></div>
<div class="r" style="left:1112.5px;top:1px;width:1px;height:48px;background:#e3e3e3"></div>
<div class="r" style="left:1190.4px;top:1px;width:1px;height:48px;background:#e3e3e3"></div>
<div class="r" style="left:1268.3px;top:1px;width:1px;height:48px;background:#e3e3e3"></div>
<div class="r" style="left:1346.6px;top:1px;width:1px;height:48px;background:#e3e3e3"></div>
<div class="r" style="left:1489.5px;top:1px;width:1px;height:48px;background:#e3e3e3"></div>
<div class="a" style="left:58.2px;top:17.8px;font-size:17.2px;font-weight:bold;color:#555">仪表编号</div>
<div class="a" style="left:175.3px;top:17.8px;font-size:17.2px;font-weight:bold;color:#555">商铺号</div>
<div class="a" style="left:305.5px;top:17.8px;font-size:17.2px;font-weight:bold;color:#555">用户编号</div>
<div class="a" style="left:409.3px;top:17.8px;font-size:17.2px;font-weight:bold;color:#555">用户名</div>
<div class="a" style="left:525.5px;top:17.8px;font-size:17.2px;font-weight:bold;color:#555">购电总额</div>
<div class="a" style="left:629.5px;top:17.8px;font-size:17.2px;font-weight:bold;color:#555">购电次数</div>
<div class="a" style="left:720.8px;top:17.8px;font-size:17.2px;font-weight:bold;color:#555">告警金额1</div>
<div class="a" style="left:818.5px;top:17.8px;font-size:17.2px;font-weight:bold;color:#555">告警金额2</div>
<div class="a" style="left:915.8px;top:17.8px;font-size:17.2px;font-weight:bold;color:#555">功率阈值(KW)</div>
<div class="a" style="left:1045.7px;top:17.8px;font-size:17.2px;font-weight:bold;color:#555">尖电价</div>
<div class="a" style="left:1124.1px;top:17.8px;font-size:17.2px;font-weight:bold;color:#555">峰电价</div>
<div class="a" style="left:1201.5px;top:17.8px;font-size:17.2px;font-weight:bold;color:#555">平电价</div>
<div class="a" style="left:1279.8px;top:17.8px;font-size:17.2px;font-weight:bold;color:#555">谷电价</div>
<div class="a" style="left:1357.7px;top:17.8px;font-size:17.2px;font-weight:bold;color:#555">采集时间</div>
<div class="a" style="left:1500.5px;top:17.8px;font-size:17.2px;font-weight:bold;color:#555">剩余金额</div>
<div class="r" style="left:11px;top:17px;width:15px;height:15px;border:1.3px solid #767676;border-radius:2.5px;background:#fff"></div>
<div class="r" style="left:6px;top:60.0px;width:15px;height:15px;border:1.3px solid #666;border-radius:2.5px;background:#fff"></div>
<div class="a" style="left:52.3px;top:58.9px;font-size:18px;color:#666">001029010B</div>
<div class="a" style="left:168.6px;top:58.9px;font-size:17.4px;color:#666">(移动)蛋糕店</div>
<div class="a" style="left:401.8px;top:58.9px;font-size:17.7px;color:#666">未开户</div>
<div class="a" style="left:1039.1px;top:58.9px;font-size:18px;color:#666">1.0000</div>
<div class="a" style="left:1116.5px;top:58.9px;font-size:18px;color:#666">1.0000</div>
<div class="a" style="left:1194.9px;top:58.9px;font-size:18px;color:#666">1.0000</div>
<div class="a" style="left:1273.2px;top:58.9px;font-size:18px;color:#666">1.0000</div>
<div class="a" style="left:1351.4px;top:58.9px;font-size:18px;color:#666">12-28 15:35:08</div>
<div class="a" style="left:1495.0px;top:58.9px;font-size:18px;color:#666">-2023.12</div>
<div class="r" style="left:6px;top:95.8px;width:15px;height:15px;border:1.3px solid #666;border-radius:2.5px;background:#fff"></div>
<div class="a" style="left:52.3px;top:94.7px;font-size:18px;color:#666">001029010E</div>
<div class="a" style="left:168.6px;top:94.7px;font-size:17.4px;color:#666">(移动)理发店</div>
<div class="a" style="left:401.8px;top:94.7px;font-size:17.7px;color:#666">未开户</div>
<div class="a" style="left:1039.1px;top:94.7px;font-size:18px;color:#666">1.0000</div>
<div class="a" style="left:1116.5px;top:94.7px;font-size:18px;color:#666">1.0000</div>
<div class="a" style="left:1194.9px;top:94.7px;font-size:18px;color:#666">1.0000</div>
<div class="a" style="left:1273.2px;top:94.7px;font-size:18px;color:#666">1.0000</div>
<div class="a" style="left:1351.4px;top:94.7px;font-size:18px;color:#666">12-28 15:35:10</div>
<div class="a" style="left:1495.0px;top:94.7px;font-size:18px;color:#666">-8017.5</div>
<div class="r" style="left:6px;top:131.6px;width:15px;height:15px;border:1.3px solid #666;border-radius:2.5px;background:#fff"></div>
<div class="a" style="left:52.3px;top:130.5px;font-size:18px;color:#666">001029010D</div>
<div class="a" style="left:168.6px;top:130.5px;font-size:17.4px;color:#666">(移动)食小天</div>
<div class="a" style="left:401.8px;top:130.5px;font-size:17.7px;color:#666">未开户</div>
<div class="a" style="left:1039.1px;top:130.5px;font-size:18px;color:#666">1.0000</div>
<div class="a" style="left:1116.5px;top:130.5px;font-size:18px;color:#666">1.0000</div>
<div class="a" style="left:1194.9px;top:130.5px;font-size:18px;color:#666">1.0000</div>
<div class="a" style="left:1273.2px;top:130.5px;font-size:18px;color:#666">1.0000</div>
<div class="a" style="left:1351.4px;top:130.5px;font-size:18px;color:#666">12-28 15:35:09</div>
<div class="a" style="left:1495.0px;top:130.5px;font-size:18px;color:#666">-6860.2</div>
<div class="r" style="left:6px;top:167.4px;width:15px;height:15px;border:1.3px solid #666;border-radius:2.5px;background:#fff"></div>
<div class="a" style="left:52.3px;top:166.3px;font-size:18px;color:#666">001029010C</div>
<div class="a" style="left:168.6px;top:166.3px;font-size:17.4px;color:#666">(移动)益和堂</div>
<div class="a" style="left:401.8px;top:166.3px;font-size:17.7px;color:#666">未开户</div>
<div class="a" style="left:1039.1px;top:166.3px;font-size:18px;color:#666">1.0000</div>
<div class="a" style="left:1116.5px;top:166.3px;font-size:18px;color:#666">1.0000</div>
<div class="a" style="left:1194.9px;top:166.3px;font-size:18px;color:#666">1.0000</div>
<div class="a" style="left:1273.2px;top:166.3px;font-size:18px;color:#666">1.0000</div>
<div class="a" style="left:1351.4px;top:166.3px;font-size:18px;color:#666">12-28 15:35:08</div>
<div class="a" style="left:1495.0px;top:166.3px;font-size:18px;color:#666">-4850.1</div>
<div class="r" style="left:6px;top:203.2px;width:15px;height:15px;border:1.3px solid #666;border-radius:2.5px;background:#fff"></div>
<div class="a" style="left:52.3px;top:202.1px;font-size:18px;color:#666">0010140101</div>
<div class="a" style="left:168.6px;top:202.1px;font-size:18px;color:#666">10号公寓洗衣机</div>
<div class="a" style="left:401.8px;top:202.1px;font-size:17.7px;color:#666">未开户</div>
<div class="a" style="left:1039.1px;top:202.1px;font-size:18px;color:#666">1.0000</div>
<div class="a" style="left:1116.5px;top:202.1px;font-size:18px;color:#666">1.0000</div>
<div class="a" style="left:1194.9px;top:202.1px;font-size:18px;color:#666">1.0000</div>
<div class="a" style="left:1273.2px;top:202.1px;font-size:18px;color:#666">1.0000</div>
<div class="a" style="left:1351.4px;top:202.1px;font-size:18px;color:#666">12-28 15:35:01</div>
<div class="a" style="left:1495.0px;top:202.1px;font-size:18px;color:#666">-156.23</div>
</div>
<div class="r" style="left:1861px;top:723px;width:26px;height:210px;background:#fff"></div>
<div class="r" style="left:279px;top:933px;width:1613px;height:44px;background:#d7d7f2"></div>
<div class="a" style="left:1770.5px;top:951.5px;font-size:18.3px;color:#666">© 2012 - 2021</div>
</body></html>
